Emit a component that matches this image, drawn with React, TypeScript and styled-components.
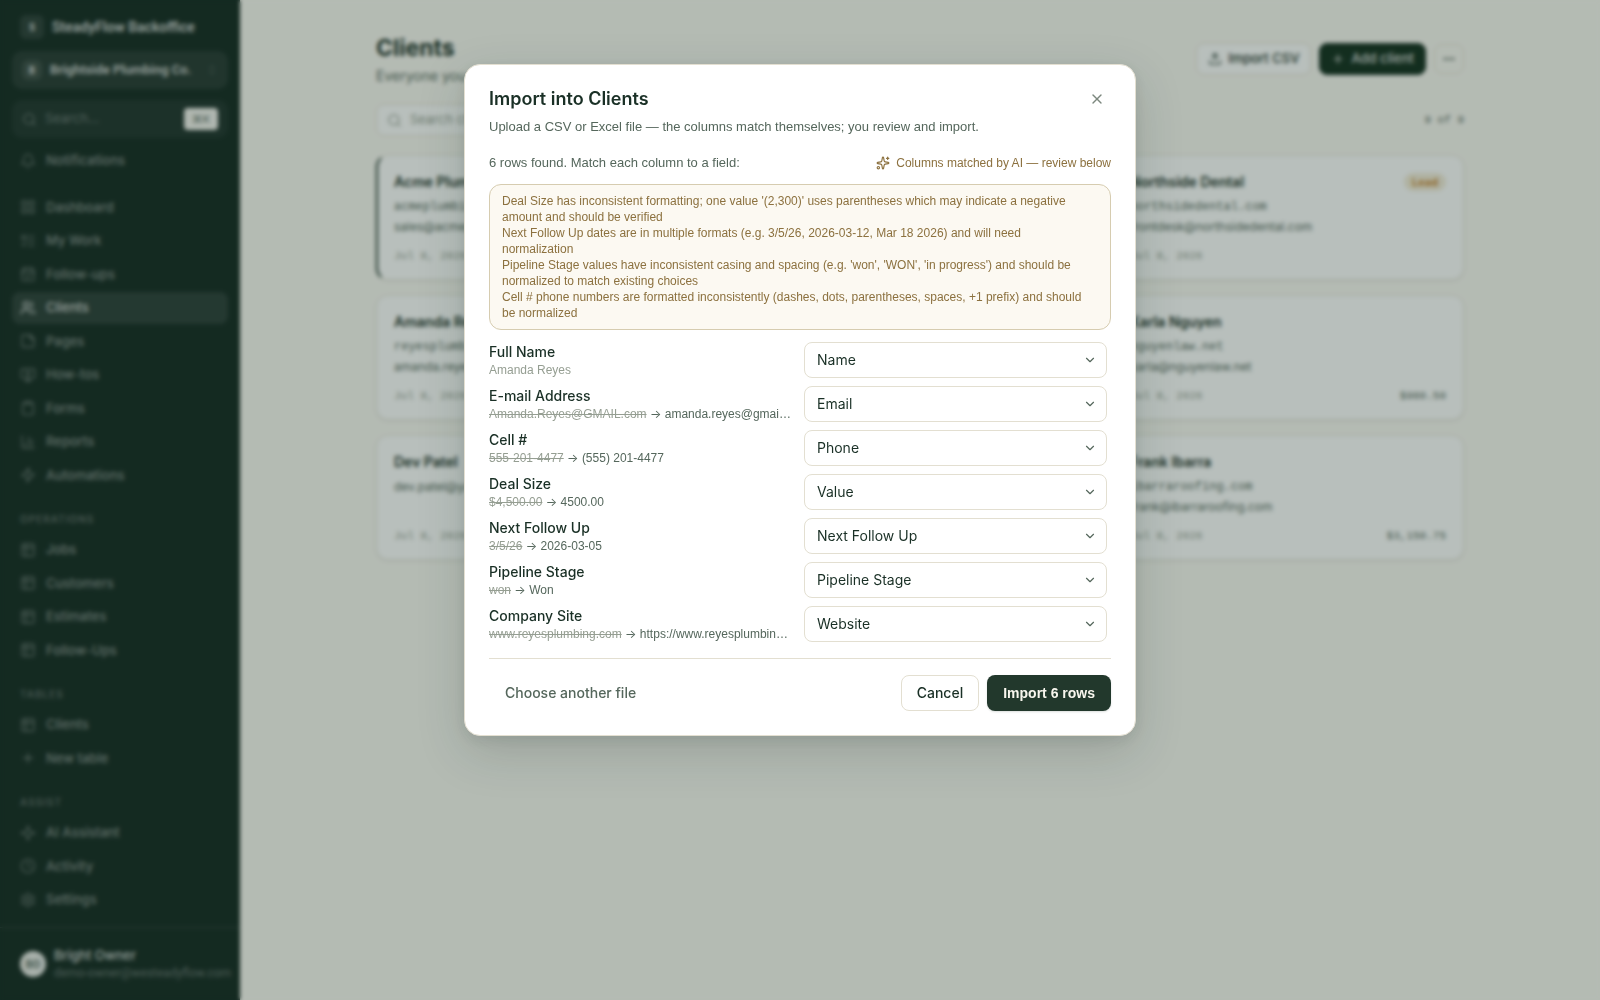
import React from "react";
import styled, { createGlobalStyle, css } from "styled-components";
import {
  Bell,
  CalendarCheck,
  ChartColumn,
  ChevronDown,
  ChevronsUpDown,
  Clipboard,
  Clock,
  Ellipsis,
  LayoutGrid,
  ListTodo,
  MonitorPlay,
  Plus,
  Search,
  Settings,
  Sparkle,
  Sparkles,
  StickyNote,
  Table2,
  Upload,
  Users,
  X,
  Zap,
} from "lucide-react";

const sans = `Inter, "Liberation Sans", sans-serif`;
const compact = `"Liberation Sans", Arial, sans-serif`;
const mono = `"Liberation Mono", monospace`;

const color = {
  pine: "#152a22",
  forest: "#22382c",
  ink: "#1a3026",
  muted: "#55675c",
  faint: "#959e92",
  line: "#e3dfd1",
  page: "#faf9f3",
  amber: "#8c713f",
  amberLine: "#d6ccb0",
  amberFill: "#fcf9f2",
};

const GlobalStyle = createGlobalStyle`
  *, *::before, *::after { box-sizing: border-box; }
  body { margin: 0; background: ${color.page}; color: ${color.ink}; font-family: ${sans}; font-size: 13px; line-height: 1.5; }
  button, input, select { font: inherit; color: inherit; }
  h1, h2, h3, p, ul { margin: 0; padding: 0; }
  ul { list-style: none; }
`;

const Shell = styled.div`
  display: flex;
  min-height: 100vh;
`;

/* ---------- sidebar ---------- */

const Sidebar = styled.aside`
  display: flex;
  flex-direction: column;
  width: 240px;
  flex: none;
  background: ${color.pine};
  color: rgba(255, 255, 255, 0.8);
`;

const SidebarTop = styled.div`
  display: flex;
  flex-direction: column;
  padding: 15px 12px 0;
`;

const Brand = styled.div`
  display: flex;
  align-items: center;
  gap: 8px;
  height: 24px;
  padding: 0 8px;
  font-family: Roboto, ${compact};
  font-size: 14px;
  font-weight: 600;
`;

const Mark = styled.span<{ $size: number }>`
  display: grid;
  place-items: center;
  flex: none;
  width: ${(p) => p.$size}px;
  height: ${(p) => p.$size}px;
  border-radius: 6px;
  background: rgba(255, 255, 255, 0.1);
  font-size: 10px;
  font-weight: 700;
`;

const Workspace = styled.button`
  display: flex;
  align-items: center;
  gap: 8px;
  height: 38px;
  margin-top: 12px;
  padding: 0 10px;
  border: 0;
  border-radius: 10px;
  background: rgba(255, 255, 255, 0.08);
  font-family: Roboto, ${compact};
  font-size: 13px;
  font-weight: 600;
  text-align: left;
  white-space: nowrap;
  svg { flex: none; margin-left: auto; opacity: 0.3; }
`;

const QuickSearch = styled.label`
  display: flex;
  align-items: center;
  gap: 8px;
  height: 38px;
  margin-top: 11px;
  padding: 0 10px;
  border-radius: 10px;
  background: rgba(255, 255, 255, 0.05);
  color: rgba(255, 255, 255, 0.35);
  svg { flex: none; }
  input {
    flex: 1;
    min-width: 0;
    padding: 0;
    border: 0;
    background: transparent;
    &::placeholder { color: rgba(255, 255, 255, 0.35); opacity: 1; }
  }
  kbd {
    display: grid;
    place-items: center;
    width: 34px;
    height: 22px;
    border-radius: 4px;
    background: #f3f3ee;
    color: #5f6f66;
    font-family: ${sans};
    font-size: 11px;
  }
`;

const Nav = styled.nav`
  display: flex;
  flex-direction: column;
  padding: 7px 12px 0;
`;

const NavList = styled.ul`
  display: flex;
  flex-direction: column;
  gap: 2px;
`;

const NavSpacer = styled.div`
  height: 15px;
`;

const NavLink = styled.a<{ $active?: boolean }>`
  display: flex;
  align-items: center;
  gap: 10px;
  padding: 6px 8px;
  border-radius: 8px;
  color: rgba(255, 255, 255, 0.48);
  font-weight: 500;
  text-decoration: none;
  svg { flex: none; opacity: 0.7; }
  ${(p) =>
    p.$active &&
    css`
      background: rgba(255, 255, 255, 0.1);
      color: rgba(255, 255, 255, 0.8);
      svg { opacity: 0.9; }
    `}
`;

const NavHeading = styled.h3`
  margin: 19px 8px 6px;
  color: rgba(255, 255, 255, 0.32);
  font-size: 10px;
  font-weight: 600;
  line-height: 18px;
  letter-spacing: 1px;
  text-transform: uppercase;
`;

const Account = styled.div`
  display: flex;
  align-items: center;
  gap: 8px;
  margin-top: auto;
  padding: 18px 12px 18px 20px;
  border-top: 1px solid rgba(255, 255, 255, 0.12);
`;

const Avatar = styled.span`
  display: grid;
  place-items: center;
  flex: none;
  width: 26px;
  height: 26px;
  border-radius: 50%;
  background: #e8eae6;
  color: #42564b;
  font-size: 10px;
  font-weight: 600;
`;

const AccountText = styled.div`
  display: flex;
  flex-direction: column;
  min-width: 0;
  line-height: 18px;
  white-space: nowrap;
  strong { font-weight: 500; }
  span { color: rgba(255, 255, 255, 0.36); font-family: Roboto, ${compact}; font-size: 12px; }
`;

/* ---------- page ---------- */

const Main = styled.main`
  flex: 1;
  min-width: 0;
`;

const Content = styled.div`
  max-width: 1152px;
  margin: 0 auto;
  padding: 32px;
`;

const PageHead = styled.header`
  display: flex;
  justify-content: space-between;
  align-items: flex-start;
`;

const PageTitle = styled.h1`
  font-size: 23px;
  font-weight: 700;
  line-height: 32px;
`;

const PageLead = styled.p`
  margin-top: 2px;
  color: ${color.muted};
  font-size: 14px;
  line-height: 20px;
`;

const Actions = styled.div`
  display: flex;
  align-items: center;
  gap: 8px;
  padding-top: 11px;
`;

const PageButton = styled.button<{ $tone?: "dark" | "outline" }>`
  display: flex;
  align-items: center;
  justify-content: center;
  gap: 6px;
  height: 32px;
  padding: 0 11px;
  border: 1px solid ${color.line};
  border-radius: 8px;
  background: #ffffff;
  font-weight: 500;
  ${(p) =>
    p.$tone === "dark" &&
    css`
      border-color: ${color.pine};
      background: #14301f;
      color: rgba(255, 255, 255, 0.85);
    `}
  ${(p) =>
    p.$tone === "outline" &&
    css`
      width: 30px;
      height: 30px;
      padding: 0;
      background: transparent;
    `}
`;

const FilterBar = styled.div`
  display: flex;
  align-items: center;
  justify-content: space-between;
  margin-top: 18px;
`;

const FilterBox = styled.label`
  display: flex;
  align-items: center;
  gap: 8px;
  width: 288px;
  height: 32px;
  padding: 0 10px;
  border: 1px solid ${color.line};
  border-radius: 8px;
  background: #ffffff;
  color: ${color.faint};
  input {
    flex: 1;
    min-width: 0;
    padding: 0;
    border: 0;
    background: transparent;
    &::placeholder { color: ${color.faint}; opacity: 1; }
  }
`;

const Count = styled.span`
  color: ${color.muted};
  font-family: ${mono};
  font-size: 11px;
`;

const CardGrid = styled.div`
  display: grid;
  grid-template-columns: repeat(3, 1fr);
  gap: 15px 16px;
  margin-top: 19px;
`;

const Card = styled.article<{ $column: number; $selected?: boolean }>`
  grid-column: ${(p) => p.$column};
  display: flex;
  flex-direction: column;
  height: 125px;
  padding: 16px 17px 15px;
  border: 1px solid #e9e7dc;
  border-radius: 12px;
  background: #ffffff;
  box-shadow: 0 1px 3px rgba(21, 42, 34, 0.1);
  ${(p) =>
    p.$selected &&
    css`
      padding-left: 16px;
      border-left: 2px solid ${color.forest};
    `}
`;

const CardHead = styled.div`
  display: flex;
  justify-content: space-between;
  align-items: center;
  margin-bottom: 5px;
  h2 { font-size: 14px; font-weight: 600; line-height: 20px; }
`;

const Badge = styled.span`
  padding: 0 8px;
  border-radius: 9px;
  background: #f3ecd9;
  color: #c27a1e;
  font-size: 11px;
  font-weight: 600;
  line-height: 18px;
`;

const CardLine = styled.span<{ $mono?: boolean }>`
  color: ${color.muted};
  font-family: ${(p) => (p.$mono ? mono : sans)};
  font-size: 12px;
  line-height: 20px;
`;

const CardFoot = styled.div`
  display: flex;
  justify-content: space-between;
  margin-top: auto;
  color: ${color.faint};
  font-family: ${mono};
  font-size: 11px;
  line-height: 16px;
  strong { color: ${color.muted}; font-weight: 400; }
`;

/* ---------- dialog ---------- */

const Backdrop = styled.div`
  position: fixed;
  inset: 0;
  display: flex;
  align-items: flex-start;
  justify-content: center;
  padding: 64px 16px;
  background: rgba(21, 42, 34, 0.3);
  backdrop-filter: blur(2px);
`;

const Dialog = styled.section`
  display: flex;
  flex-direction: column;
  width: 100%;
  max-width: 672px;
  padding: 24px;
  border: 1px solid ${color.line};
  border-radius: 16px;
  background: #ffffff;
  box-shadow: 0 16px 48px rgba(21, 42, 34, 0.18), 0 4px 12px rgba(21, 42, 34, 0.08);
`;

const DialogHead = styled.header`
  display: flex;
  justify-content: space-between;
  align-items: center;
  margin-bottom: 8px;
  h2 { font-size: 18px; font-weight: 600; line-height: 20px; }
`;

const CloseButton = styled.button`
  display: grid;
  place-items: center;
  width: 28px;
  height: 20px;
  padding: 0;
  border: 0;
  background: transparent;
  color: #7c877e;
`;

const Text = styled.p`
  color: ${color.muted};
  font-family: ${compact};
  font-size: 13px;
  line-height: 20px;
`;

const Summary = styled.div`
  display: flex;
  justify-content: space-between;
  align-items: center;
  margin: 16px 0 11px;
`;

const AiNote = styled.span`
  display: flex;
  align-items: center;
  gap: 6px;
  color: ${color.amber};
  font-family: ${compact};
  font-size: 12px;
  line-height: 16px;
`;

const Warnings = styled.ul`
  padding: 8px 20px 8px 12px;
  border: 1px solid ${color.amberLine};
  border-radius: 12px;
  background: ${color.amberFill};
  color: ${color.amber};
  font-family: ${compact};
  font-size: 12px;
  line-height: 16px;
`;

const Mapping = styled.div`
  display: flex;
  flex-direction: column;
  gap: 8px;
  margin-top: 12px;
  padding: 0 4px 16px 0;
`;

const MapRow = styled.div`
  display: grid;
  grid-template-columns: repeat(2, minmax(0, 1fr));
  gap: 12px;
  align-items: center;
  height: 36px;
`;

const Source = styled.div`
  display: flex;
  flex-direction: column;
  label { font-size: 14px; font-weight: 500; line-height: 20px; }
`;

const Sample = styled.span`
  overflow: hidden;
  color: ${color.muted};
  font-family: ${compact};
  font-size: 12px;
  line-height: 16px;
  text-overflow: ellipsis;
  white-space: nowrap;
  s, em { color: ${color.faint}; font-style: normal; }
`;

const Arrow = styled.span`
  font-family: ${sans};
`;

const Field = styled.div`
  display: grid;
  align-items: center;
  > * { grid-area: 1 / 1; }
  svg { justify-self: end; margin-right: 10px; color: #55675c; pointer-events: none; }
`;

const Select = styled.select`
  width: 100%;
  height: 36px;
  padding: 0 32px 0 12px;
  border: 1px solid ${color.line};
  border-radius: 8px;
  background: #ffffff;
  font-size: 14px;
  line-height: 20px;
  appearance: none;
`;

const DialogFoot = styled.footer`
  display: flex;
  gap: 8px;
  padding-top: 16px;
  border-top: 1px solid ${color.line};
`;

const Button = styled.button<{ $kind: "ghost" | "outline" | "primary" }>`
  height: 36px;
  padding: 0 15px;
  border: 1px solid transparent;
  border-radius: 8px;
  background: #ffffff;
  font-size: 14px;
  font-weight: 500;
  line-height: 20px;
  white-space: nowrap;
  ${(p) => p.$kind === "ghost" && css`margin-right: auto; color: ${color.muted};`}
  ${(p) => p.$kind === "outline" && css`border-color: ${color.line};`}
  ${(p) =>
    p.$kind === "primary" &&
    css`
      background: ${color.forest};
      color: #f8f6ee;
      font-family: ${compact};
      font-weight: 700;
      box-shadow: 0 1px 2px rgba(21, 42, 34, 0.15);
    `}
`;

/* ---------- data ---------- */

type Item = { label: string; icon: React.ElementType; active?: boolean };

const primary: Item[] = [
  { label: "Dashboard", icon: LayoutGrid },
  { label: "My Work", icon: ListTodo },
  { label: "Follow-ups", icon: CalendarCheck },
  { label: "Clients", icon: Users, active: true },
  { label: "Pages", icon: StickyNote },
  { label: "How-tos", icon: MonitorPlay },
  { label: "Forms", icon: Clipboard },
  { label: "Reports", icon: ChartColumn },
  { label: "Automations", icon: Zap },
];

const groups: { title: string; items: Item[] }[] = [
  {
    title: "Operations",
    items: ["Jobs", "Customers", "Estimates", "Follow-Ups"].map((label) => ({ label, icon: Table2 })),
  },
  {
    title: "Tables",
    items: [
      { label: "Clients", icon: Table2 },
      { label: "New table", icon: Plus },
    ],
  },
  {
    title: "Assist",
    items: [
      { label: "AI Assistant", icon: Sparkle },
      { label: "Activity", icon: Clock },
      { label: "Settings", icon: Settings },
    ],
  },
];

const clients = [
  { name: "Acme Plumbing", site: "acmeplumbing.com", email: "sales@acmeplumbing.com", column: 1, selected: true },
  { name: "Northside Dental", site: "northsidedental.com", email: "frontdesk@northsidedental.com", column: 3, tag: "Lead" },
  { name: "Amanda Reyes", site: "reyesplumbing.com", email: "amanda.reyes@gmail.com", column: 1 },
  { name: "Karla Nguyen", site: "nguyenlaw.net", email: "karla@nguyenlaw.net", column: 3, value: "$980.50" },
  { name: "Dev Patel", email: "dev.patel@yahoo.com", column: 1 },
  { name: "Frank Ibarra", site: "ibarraroofing.com", email: "frank@ibarraroofing.com", column: 3, value: "$3,150.75" },
];

const warnings = [
  "Deal Size has inconsistent formatting; one value '(2,300)' uses parentheses which may indicate a negative amount and should be verified",
  "Next Follow Up dates are in multiple formats (e.g. 3/5/26, 2026-03-12, Mar 18 2026) and will need normalization",
  "Pipeline Stage values have inconsistent casing and spacing (e.g. 'won', 'WON', 'in progress') and should be normalized to match existing choices",
  "Cell # phone numbers are formatted inconsistently (dashes, dots, parentheses, spaces, +1 prefix) and should be normalized",
];

const columns = [
  { source: "Full Name", from: "Amanda Reyes", field: "Name" },
  { source: "E-mail Address", from: "Amanda.Reyes@GMAIL.com", to: "amanda.reyes@gmail.com", field: "Email" },
  { source: "Cell #", from: "555-201-4477", to: "(555) 201-4477", field: "Phone" },
  { source: "Deal Size", from: "$4,500.00", to: "4500.00", field: "Value" },
  { source: "Next Follow Up", from: "3/5/26", to: "2026-03-05", field: "Next Follow Up" },
  { source: "Pipeline Stage", from: "won", to: "Won", field: "Pipeline Stage" },
  { source: "Company Site", from: "www.reyesplumbing.com", to: "https://www.reyesplumbing.com", field: "Website" },
];

function NavItems({ items }: { items: Item[] }) {
  return (
    <NavList>
      {items.map(({ label, icon: Icon, active }) => (
        <li key={label}>
          <NavLink href="#" $active={active}>
            <Icon size={16} strokeWidth={2} />
            {label}
          </NavLink>
        </li>
      ))}
    </NavList>
  );
}

function AppSidebar() {
  return (
    <Sidebar>
      <SidebarTop>
        <Brand>
          <Mark $size={24}>S</Mark>
          SteadyFlow Backoffice
        </Brand>
        <Workspace type="button">
          <Mark $size={20}>B</Mark>
          Brightside Plumbing Co.
          <ChevronsUpDown size={12} />
        </Workspace>
        <QuickSearch>
          <Search size={15} />
          <input type="text" placeholder="Search…" aria-label="Search" />
          <kbd>⌘K</kbd>
        </QuickSearch>
      </SidebarTop>
      <Nav>
        <NavItems items={[{ label: "Notifications", icon: Bell }]} />
        <NavSpacer />
        <NavItems items={primary} />
        {groups.map((group) => (
          <React.Fragment key={group.title}>
            <NavHeading>{group.title}</NavHeading>
            <NavItems items={group.items} />
          </React.Fragment>
        ))}
      </Nav>
      <Account>
        <Avatar>BO</Avatar>
        <AccountText>
          <strong>Bright Owner</strong>
          <span>demo-owner@westeadyflow.com</span>
        </AccountText>
      </Account>
    </Sidebar>
  );
}

function ClientsPage() {
  return (
    <Main>
      <Content>
        <PageHead>
          <div>
            <PageTitle>Clients</PageTitle>
            <PageLead>Everyone you work with</PageLead>
          </div>
          <Actions>
            <PageButton type="button">
              <Upload size={14} />
              Import CSV
            </PageButton>
            <PageButton type="button" $tone="dark">
              <Plus size={14} />
              Add client
            </PageButton>
            <PageButton type="button" $tone="outline" aria-label="More">
              <Ellipsis size={14} />
            </PageButton>
          </Actions>
        </PageHead>
        <FilterBar>
          <FilterBox>
            <Search size={15} />
            <input type="text" placeholder="Search clients" aria-label="Search clients" />
          </FilterBox>
          <Count>9 of 9</Count>
        </FilterBar>
        <CardGrid>
          {clients.map((c) => (
            <Card key={c.name} $column={c.column} $selected={c.selected}>
              <CardHead>
                <h2>{c.name}</h2>
                {c.tag && <Badge>{c.tag}</Badge>}
              </CardHead>
              {c.site && <CardLine $mono>{c.site}</CardLine>}
              <CardLine>{c.email}</CardLine>
              <CardFoot>
                <span>Jul 8, 2026</span>
                {c.value && <strong>{c.value}</strong>}
              </CardFoot>
            </Card>
          ))}
        </CardGrid>
      </Content>
    </Main>
  );
}

function ImportDialog() {
  return (
    <Backdrop>
      <Dialog role="dialog" aria-modal="true" aria-labelledby="import-title">
        <DialogHead>
          <h2 id="import-title">Import into Clients</h2>
          <CloseButton type="button" aria-label="Close">
            <X size={16} strokeWidth={2} />
          </CloseButton>
        </DialogHead>
        <Text>Upload a CSV or Excel file — the columns match themselves; you review and import.</Text>
        <Summary>
          <Text>6 rows found. Match each column to a field:</Text>
          <AiNote>
            <Sparkles size={14} />
            Columns matched by AI — review below
          </AiNote>
        </Summary>
        <Warnings>
          {warnings.map((text) => (
            <li key={text}>{text}</li>
          ))}
        </Warnings>
        <Mapping>
          {columns.map((col, i) => (
            <MapRow key={col.source}>
              <Source>
                <label htmlFor={`field-${i}`}>{col.source}</label>
                <Sample>
                  {col.to ? (
                    <>
                      <s>{col.from}</s> <Arrow>→</Arrow> {col.to}
                    </>
                  ) : (
                    <em>{col.from}</em>
                  )}
                </Sample>
              </Source>
              <Field>
                <Select id={`field-${i}`} defaultValue={col.field}>
                  {columns.map((option) => (
                    <option key={option.field}>{option.field}</option>
                  ))}
                </Select>
                <ChevronDown size={14} />
              </Field>
            </MapRow>
          ))}
        </Mapping>
        <DialogFoot>
          <Button type="button" $kind="ghost">Choose another file</Button>
          <Button type="button" $kind="outline">Cancel</Button>
          <Button type="button" $kind="primary">Import 6 rows</Button>
        </DialogFoot>
      </Dialog>
    </Backdrop>
  );
}

export default function App() {
  return (
    <>
      <GlobalStyle />
      <Shell>
        <AppSidebar />
        <ClientsPage />
      </Shell>
      <ImportDialog />
    </>
  );
}
